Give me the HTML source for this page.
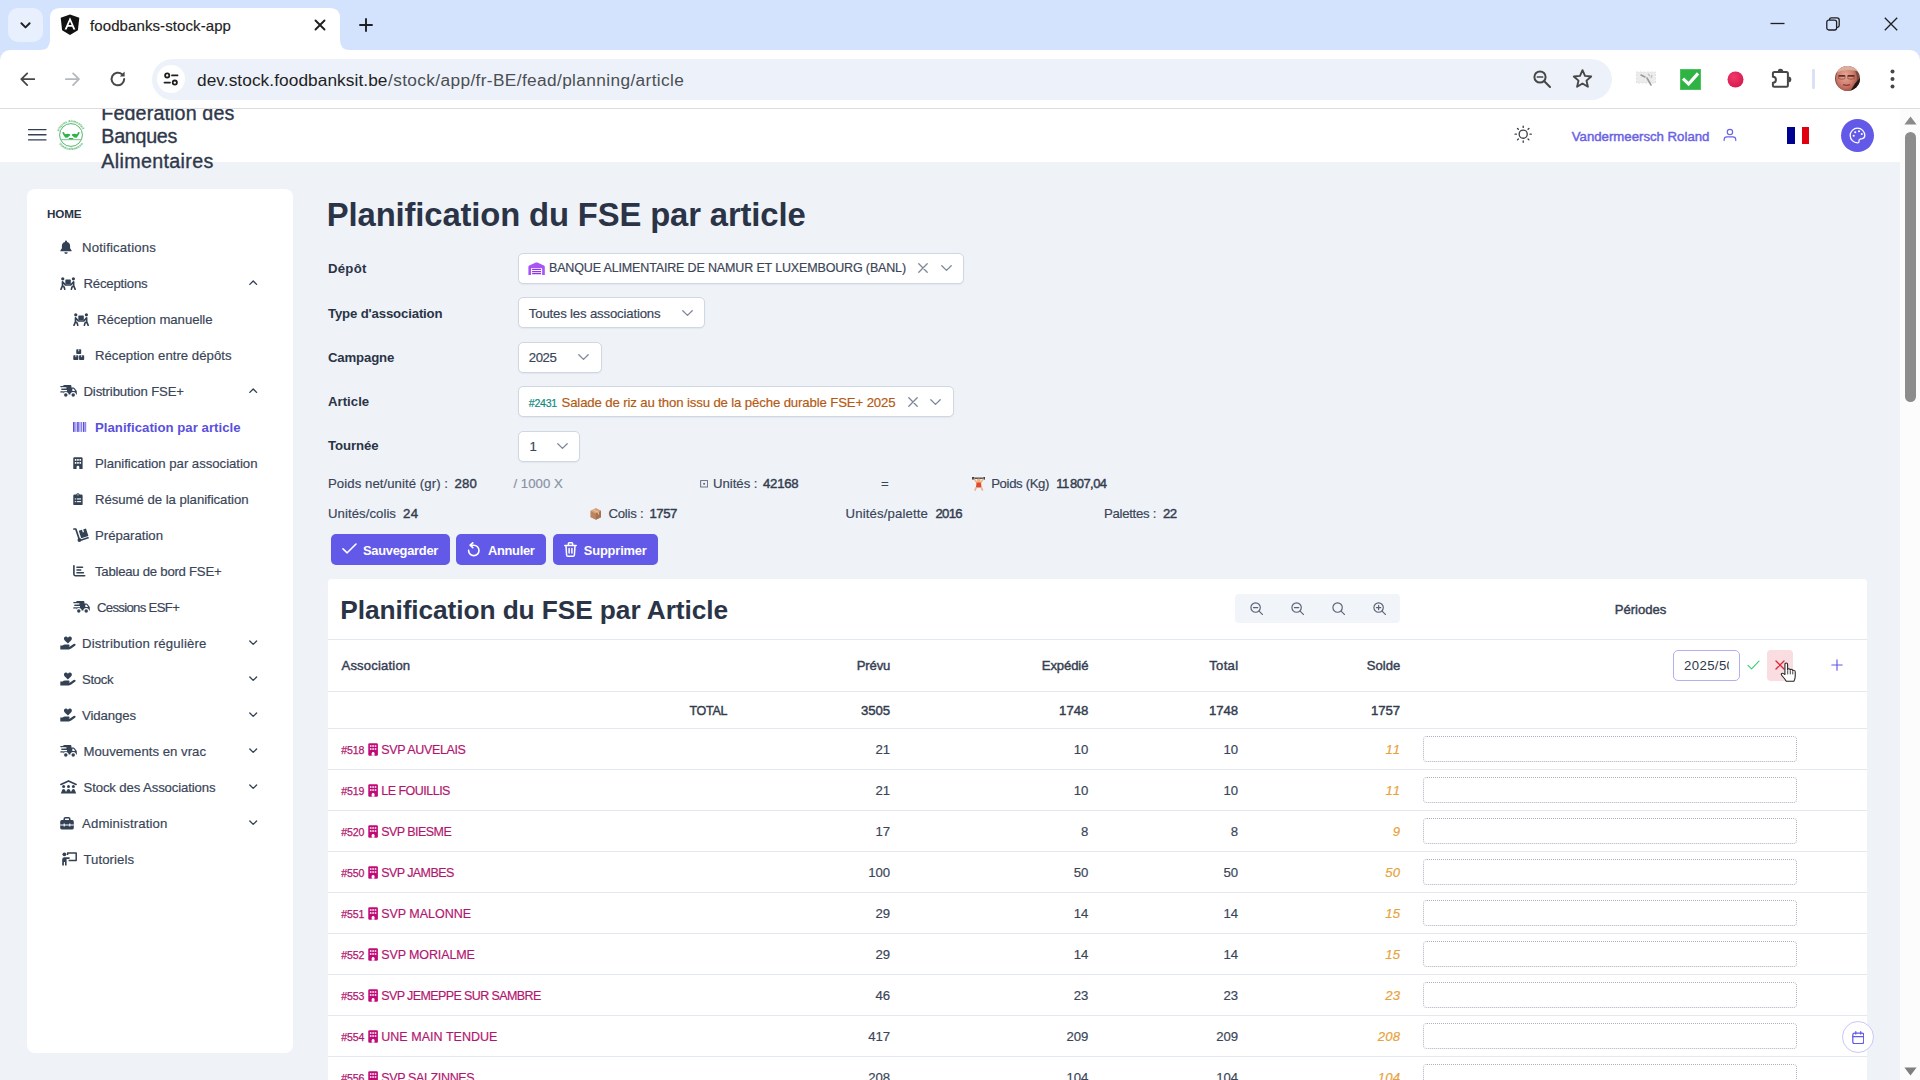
<!DOCTYPE html>
<html lang="fr"><head><meta charset="utf-8"><title>foodbanks-stock-app</title>
<style>
html,body{margin:0;padding:0}
body{width:1920px;height:1080px;overflow:hidden;position:relative;background:#eff3f8;font-family:'Liberation Sans', sans-serif;color:#334155}
div,svg{box-sizing:border-box}
</style></head><body>
<div  style="position:absolute;left:0px;top:109px;width:1900px;height:53px;background:#fff;"></div>
<div  style="position:absolute;left:1900px;top:109px;width:20px;height:971px;background:#fcfcfc;"></div>
<svg style="position:absolute;left:1903.5px;top:116px;" width="13" height="9" viewBox="0 0 13 9" preserveAspectRatio="none"><path d="M6.5 0.6 L12.6 8.4 H0.4 Z" fill="#8a8a8a"/></svg>
<div  style="position:absolute;left:1905px;top:132px;width:11px;height:270px;background:#8c8c8c;border-radius:6px;"></div>
<svg style="position:absolute;left:1903.5px;top:1066.5px;" width="13" height="9" viewBox="0 0 13 9" preserveAspectRatio="none"><path d="M6.5 8.4 L12.6 0.6 H0.4 Z" fill="#7f7f7f"/></svg>
<svg style="position:absolute;left:28px;top:127px;" width="19" height="16" viewBox="0 0 19 16" preserveAspectRatio="none"><path d="M0.5 2.6 H18 M0.5 7.7 H18 M0.5 12.8 H18" stroke="#334155" stroke-width="1.35" stroke-linecap="round"/></svg>
<svg style="position:absolute;left:55.6px;top:120.3px;overflow:visible;" width="30" height="30" viewBox="0 0 30 30" preserveAspectRatio="none"><defs><path id="lgt" d="M3.07 10.66 A12.7 12.7 0 0 1 26.93 10.66"/><path id="lgb" d="M0.73 19.64 A15.0 15.0 0 0 0 29.27 19.64"/></defs>
<circle cx="15" cy="15" r="11.4" fill="none" stroke="#3aa857" stroke-width="0.85"/>
<text font-family="Liberation Sans, sans-serif" font-size="3.4" font-weight="700" fill="#36b058" letter-spacing="0.1"><textPath href="#lgt" startOffset="50%" text-anchor="middle">Banques Alimentaires</textPath></text>
<text font-family="Liberation Sans, sans-serif" font-size="3.4" font-weight="700" fill="#36b058" letter-spacing="0.3"><textPath href="#lgb" startOffset="50%" text-anchor="middle">Voedselbanken</textPath></text>
<path d="M6.2 12.4 Q7.4 11.4 8.2 12.6 L8.9 14.2 Q11.2 13.6 13.4 14 Q14.6 14.4 14 15.6 Q12.6 16.4 11.8 17.6 L9.4 17.8 Q7.4 15.4 6.2 12.4 Z" fill="#2eb24c"/>
<path d="M23.8 12.4 Q22.6 11.4 21.8 12.6 L21.1 14.2 Q18.8 13.6 16.6 14 Q15.4 14.4 16 15.6 Q17.4 16.4 18.2 17.6 L20.6 17.8 Q22.6 15.4 23.8 12.4 Z" fill="#2eb24c"/>
<path d="M12.4 17.9 H17.6 Q17.2 19.5 15 19.5 Q12.8 19.5 12.4 17.9 Z" fill="#2eb24c"/>
<path d="M5 19.7 H25" stroke="#5fbf78" stroke-width="0.9"/></svg>
<div style="position:absolute;top:97.97px;line-height:30px;height:30px;white-space:pre;font-size:19.7px;font-weight:400;color:#2f384a;font-style:normal;letter-spacing:0.130px;-webkit-text-stroke:0.35px #2f384a;left:101.30px;">Federation des</div>
<div style="position:absolute;top:121.37px;line-height:30px;height:30px;white-space:pre;font-size:19.7px;font-weight:400;color:#2f384a;font-style:normal;letter-spacing:-0.282px;-webkit-text-stroke:0.35px #2f384a;left:101.30px;">Banques</div>
<div style="position:absolute;top:146.07px;line-height:30px;height:30px;white-space:pre;font-size:19.7px;font-weight:400;color:#2f384a;font-style:normal;letter-spacing:0.337px;-webkit-text-stroke:0.35px #2f384a;left:101.30px;">Alimentaires</div>
<svg style="position:absolute;left:1514.3px;top:125.2px;" width="18.4" height="18.4" viewBox="0 0 20 20" preserveAspectRatio="none"><g fill="none" stroke="#3a3f47" stroke-width="1.45" stroke-linecap="round"><circle cx="10" cy="10" r="4.4"/><path d="M10 1.2 V2.6 M10 17.4 V18.8 M1.2 10 H2.6 M17.4 10 H18.8 M3.8 3.8 L4.7 4.7 M15.3 15.3 L16.2 16.2 M3.8 16.2 L4.7 15.3 M15.3 4.7 L16.2 3.8"/></g></svg>
<div style="position:absolute;top:126.85px;line-height:20px;height:20px;white-space:pre;font-size:13.2px;font-weight:400;color:#6a62e4;font-style:normal;letter-spacing:0.001px;-webkit-text-stroke:0.45px #6a62e4;left:1571.80px;">Vandermeersch Roland</div>
<svg style="position:absolute;left:1722.8px;top:127.9px;" width="13.9" height="13.9" viewBox="0 0 15 15" preserveAspectRatio="none"><g fill="none" stroke="#6a62e4" stroke-width="1.25" stroke-linecap="round"><circle cx="7.5" cy="4.4" r="2.9"/><path d="M1.2 13.6 V12.6 Q1.2 9.6 4.4 9.6 H10.6 Q13.8 9.6 13.8 12.6 V13.6"/></g></svg>
<div  style="position:absolute;left:1787px;top:127px;width:7.5px;height:16.7px;background:#000091;"></div>
<div  style="position:absolute;left:1794.5px;top:127px;width:7.2px;height:16.7px;background:#ffffff;"></div>
<div  style="position:absolute;left:1801.7px;top:127px;width:7.5px;height:16.7px;background:#e1000f;"></div>
<div  style="position:absolute;left:1841px;top:118.8px;width:33px;height:33px;background:#6259e8;border-radius:50%;"></div>
<svg style="position:absolute;left:1849px;top:126.5px;" width="17" height="17" viewBox="0 0 17 17" preserveAspectRatio="none"><g fill="none" stroke="#fff" stroke-width="1.3" stroke-linecap="round" stroke-linejoin="round"><path d="M8.5 1.2 A7.3 7.3 0 1 0 8.5 15.8 Q10.2 15.8 10 14.2 Q9.6 12.6 11.2 12 L13.4 11.6 Q15.8 11 15.8 8.5 A7.3 7.3 0 0 0 8.5 1.2 Z"/></g><g fill="#fff"><circle cx="4.7" cy="8.8" r="1.05"/><circle cx="6.2" cy="5.3" r="1.05"/><circle cx="10" cy="4.3" r="1.05"/><circle cx="12.8" cy="7" r="1.05"/></g></svg>
<div  style="position:absolute;left:27px;top:189px;width:266px;height:864px;background:#fff;border-radius:8px;"></div>
<div style="position:absolute;top:204.87px;line-height:18px;height:18px;white-space:pre;font-size:11.7px;font-weight:700;color:#2b3445;font-style:normal;letter-spacing:-0.161px;left:47.00px;">HOME</div>
<svg style="position:absolute;left:60px;top:240.2px;" width="12.0" height="14.0" viewBox="0 0 12 14" preserveAspectRatio="none"><path d="M6 0.4 a1 1 0 0 1 1 1 v0.5 a4.1 4.1 0 0 1 3.1 4 v2.4 l1.5 2.1 v0.9 h-11.2 v-0.9 l1.5 -2.1 v-2.4 a4.1 4.1 0 0 1 3.1 -4 v-0.5 a1 1 0 0 1 1 -1 z M4.3 12.2 a1.7 1.7 0 0 0 3.4 0 z" fill="#334155"/></svg>
<div style="position:absolute;top:238.15px;line-height:20px;height:20px;white-space:pre;font-size:13.2px;font-weight:400;color:#3a4558;font-style:normal;letter-spacing:0.172px;-webkit-text-stroke:0.18px #3a4558;left:82.00px;">Notifications</div>
<svg style="position:absolute;left:60px;top:276.55px;" width="16.15" height="13.3" viewBox="0 0 17 14" preserveAspectRatio="none"><g fill="#334155"><circle cx="2.9" cy="1.9" r="1.7"/><circle cx="14.1" cy="1.9" r="1.7"/><rect x="5.6" y="2.6" width="5.8" height="5" rx="0.5"/></g><g fill="none" stroke="#334155" stroke-width="1.7" stroke-linecap="round" stroke-linejoin="round"><path d="M2.6 5 V9.2 L4.4 10.6 L5 13 M2.4 9.6 L1 13 M3 5.4 L5.6 8.4 H11.4 L14 5.4 M14.4 5 V9.2 L12.6 10.6 L12 13 M14.6 9.6 L16 13"/></g></svg>
<div style="position:absolute;top:274.15px;line-height:20px;height:20px;white-space:pre;font-size:13.2px;font-weight:400;color:#3a4558;font-style:normal;letter-spacing:-0.209px;-webkit-text-stroke:0.18px #3a4558;left:83.50px;">Réceptions</div>
<svg style="position:absolute;left:249.3px;top:280.3px;" width="8.4" height="5.4" viewBox="0 0 8.4 5.4" preserveAspectRatio="none"><path d="M0.8 4.4 L4.2 1 L7.6 4.4" fill="none" stroke="#334155" stroke-width="1.35" stroke-linecap="round" stroke-linejoin="round"/></svg>
<svg style="position:absolute;left:73px;top:312.55px;" width="16.15" height="13.3" viewBox="0 0 17 14" preserveAspectRatio="none"><g fill="#334155"><circle cx="2.9" cy="1.9" r="1.7"/><circle cx="14.1" cy="1.9" r="1.7"/><rect x="5.6" y="2.6" width="5.8" height="5" rx="0.5"/></g><g fill="none" stroke="#334155" stroke-width="1.7" stroke-linecap="round" stroke-linejoin="round"><path d="M2.6 5 V9.2 L4.4 10.6 L5 13 M2.4 9.6 L1 13 M3 5.4 L5.6 8.4 H11.4 L14 5.4 M14.4 5 V9.2 L12.6 10.6 L12 13 M14.6 9.6 L16 13"/></g></svg>
<div style="position:absolute;top:310.15px;line-height:20px;height:20px;white-space:pre;font-size:13.2px;font-weight:400;color:#3a4558;font-style:normal;letter-spacing:-0.062px;-webkit-text-stroke:0.18px #3a4558;left:97.00px;">Réception manuelle</div>
<svg style="position:absolute;left:73.3px;top:349.47999999999996px;" width="11.44" height="11.44" viewBox="0 0 13 13" preserveAspectRatio="none"><g fill="#334155"><rect x="3.7" y="0.3" width="5.6" height="5.4" rx="0.9"/><rect x="0.3" y="7" width="5.8" height="5.6" rx="0.9"/><rect x="6.9" y="7" width="5.8" height="5.6" rx="0.9"/></g><g stroke="#fff" stroke-width="0.9"><path d="M6.5 0.3 V2.6 M3.2 7 V9.2 M9.8 7 V9.2"/></g></svg>
<div style="position:absolute;top:346.15px;line-height:20px;height:20px;white-space:pre;font-size:13.2px;font-weight:400;color:#3a4558;font-style:normal;letter-spacing:0.006px;-webkit-text-stroke:0.18px #3a4558;left:95.00px;">Réception entre dépôts</div>
<svg style="position:absolute;left:60px;top:384.2px;" width="17.0" height="14.0" viewBox="0 0 17 14" preserveAspectRatio="none"><g fill="#334155"><path d="M3.4 1 H10.4 Q11.4 1 11.4 2 V3.4 H13.4 Q14 3.4 14.4 3.9 L16.4 6.4 Q16.8 6.9 16.8 7.5 V10.6 H3.4 Z"/><rect x="0.2" y="1.9" width="5.4" height="1.3" rx="0.6"/><rect x="1.2" y="4.6" width="5" height="1.3" rx="0.6"/><rect x="0.2" y="7.3" width="4.6" height="1.3" rx="0.6"/></g><g fill="#334155" stroke="#fff" stroke-width="1.1"><circle cx="5.8" cy="10.9" r="2.3"/><circle cx="13.2" cy="10.9" r="2.3"/></g><path d="M12.3 4.8 H13.6 L15.2 6.9 H12.3 Z" fill="#fff"/><g stroke="#fff" stroke-width="1.1"><path d="M2.6 3.9 H6.4 M2.6 6.6 H7 "/></g></svg>
<div style="position:absolute;top:382.15px;line-height:20px;height:20px;white-space:pre;font-size:13.2px;font-weight:400;color:#3a4558;font-style:normal;letter-spacing:-0.151px;-webkit-text-stroke:0.18px #3a4558;left:83.50px;">Distribution FSE+</div>
<svg style="position:absolute;left:249.3px;top:388.3px;" width="8.4" height="5.4" viewBox="0 0 8.4 5.4" preserveAspectRatio="none"><path d="M0.8 4.4 L4.2 1 L7.6 4.4" fill="none" stroke="#334155" stroke-width="1.35" stroke-linecap="round" stroke-linejoin="round"/></svg>
<svg style="position:absolute;left:73px;top:422.25px;" width="13.5" height="9.9" viewBox="0 0 15 11" preserveAspectRatio="none"><g fill="#5a50dc"><rect x="0" y="0" width="1.8" height="11"/><rect x="2.8" y="0" width="0.9" height="11"/><rect x="4.6" y="0" width="1.8" height="11"/><rect x="7.3" y="0" width="0.9" height="11"/><rect x="9.2" y="0" width="0.9" height="11"/><rect x="11" y="0" width="1.8" height="11"/><rect x="13.7" y="0" width="0.9" height="11"/></g></svg>
<div style="position:absolute;top:418.15px;line-height:20px;height:20px;white-space:pre;font-size:13.2px;font-weight:700;color:#5a50dc;font-style:normal;letter-spacing:0.016px;left:95.00px;">Planification par article</div>
<svg style="position:absolute;left:73px;top:456.9px;" width="9.9" height="12.6" viewBox="0 0 11 14" preserveAspectRatio="none"><rect x="0.3" y="0.3" width="10.4" height="13.4" rx="1.3" fill="#334155"/><g fill="#fff"><rect x="2" y="2.3" width="1.8" height="1.8" rx="0.3"/><rect x="4.6" y="2.3" width="1.8" height="1.8" rx="0.3"/><rect x="7.2" y="2.3" width="1.8" height="1.8" rx="0.3"/><rect x="2" y="5.6" width="1.8" height="1.8" rx="0.3"/><rect x="4.6" y="5.6" width="1.8" height="1.8" rx="0.3"/><rect x="7.2" y="5.6" width="1.8" height="1.8" rx="0.3"/><path d="M4 13.7 V11 Q4 9.6 5.5 9.6 Q7 9.6 7 11 V13.7 Z"/></g></svg>
<div style="position:absolute;top:454.15px;line-height:20px;height:20px;white-space:pre;font-size:13.2px;font-weight:400;color:#3a4558;font-style:normal;letter-spacing:-0.035px;-webkit-text-stroke:0.18px #3a4558;left:95.00px;">Planification par association</div>
<svg style="position:absolute;left:73px;top:492.9px;" width="9.9" height="12.6" viewBox="0 0 11 14" preserveAspectRatio="none"><path d="M1.8 1.6 H3.6 A2 2 0 0 1 7.4 1.6 H9.2 Q10.7 1.6 10.7 3.1 V12.2 Q10.7 13.7 9.2 13.7 H1.8 Q0.3 13.7 0.3 12.2 V3.1 Q0.3 1.6 1.8 1.6 Z" fill="#334155"/><g fill="#fff"><circle cx="5.5" cy="2" r="0.7"/><rect x="2" y="6" width="1.2" height="1.2"/><rect x="4.2" y="6" width="4.8" height="1.2"/><rect x="2" y="9" width="1.2" height="1.2"/><rect x="4.2" y="9" width="4.8" height="1.2"/></g></svg>
<div style="position:absolute;top:490.15px;line-height:20px;height:20px;white-space:pre;font-size:13.2px;font-weight:400;color:#3a4558;font-style:normal;letter-spacing:-0.047px;-webkit-text-stroke:0.18px #3a4558;left:95.00px;">Résumé de la planification</div>
<svg style="position:absolute;left:73px;top:528.2px;" width="16.0" height="14.0" viewBox="0 0 16 14" preserveAspectRatio="none"><g fill="none" stroke="#334155" stroke-width="1.7" stroke-linecap="round" stroke-linejoin="round"><path d="M0.9 1 H2.8 L6 10.4"/><path d="M8.4 12 L15 9.8"/></g><circle cx="6.4" cy="12" r="1.9" fill="#334155"/><path d="M5.8 2.8 L9 1.8 L9.8 4.4 L11 4 L10.2 1.4 L13 0.5 L15.4 8 L8.2 10.3 Z" fill="#334155"/></svg>
<div style="position:absolute;top:526.15px;line-height:20px;height:20px;white-space:pre;font-size:13.2px;font-weight:400;color:#3a4558;font-style:normal;letter-spacing:-0.018px;-webkit-text-stroke:0.18px #3a4558;left:95.00px;">Préparation</div>
<svg style="position:absolute;left:73px;top:565.35px;" width="12.6" height="11.7" viewBox="0 0 14 13" preserveAspectRatio="none"><g fill="none" stroke="#334155" stroke-linecap="round" stroke-linejoin="round"><path d="M1 0.9 V10.4 Q1 11.9 2.5 11.9 H13" stroke-width="1.8"/><path d="M4.4 2.4 H10.6 M4.4 5.5 H8.6 M4.4 8.6 H11.6" stroke-width="1.7"/></g></svg>
<div style="position:absolute;top:562.15px;line-height:20px;height:20px;white-space:pre;font-size:13.2px;font-weight:400;color:#3a4558;font-style:normal;letter-spacing:-0.262px;-webkit-text-stroke:0.18px #3a4558;left:95.00px;">Tableau de bord FSE+</div>
<svg style="position:absolute;left:73px;top:600.2px;" width="17.0" height="14.0" viewBox="0 0 17 14" preserveAspectRatio="none"><g fill="#334155"><path d="M3.4 1 H10.4 Q11.4 1 11.4 2 V3.4 H13.4 Q14 3.4 14.4 3.9 L16.4 6.4 Q16.8 6.9 16.8 7.5 V10.6 H3.4 Z"/><rect x="0.2" y="1.9" width="5.4" height="1.3" rx="0.6"/><rect x="1.2" y="4.6" width="5" height="1.3" rx="0.6"/><rect x="0.2" y="7.3" width="4.6" height="1.3" rx="0.6"/></g><g fill="#334155" stroke="#fff" stroke-width="1.1"><circle cx="5.8" cy="10.9" r="2.3"/><circle cx="13.2" cy="10.9" r="2.3"/></g><path d="M12.3 4.8 H13.6 L15.2 6.9 H12.3 Z" fill="#fff"/><g stroke="#fff" stroke-width="1.1"><path d="M2.6 3.9 H6.4 M2.6 6.6 H7 "/></g></svg>
<div style="position:absolute;top:598.15px;line-height:20px;height:20px;white-space:pre;font-size:13.2px;font-weight:400;color:#3a4558;font-style:normal;letter-spacing:-0.701px;-webkit-text-stroke:0.18px #3a4558;left:97.00px;">Cessions ESF+</div>
<svg style="position:absolute;left:60px;top:636.2px;" width="16.0" height="14.0" viewBox="0 0 16 14" preserveAspectRatio="none"><path d="M7.9 1.7 Q6.9 0.2 5.5 0.5 Q3.9 0.9 3.9 2.6 Q3.9 3.7 4.8 4.6 L7.9 7.5 L11 4.6 Q11.9 3.7 11.9 2.6 Q11.9 0.9 10.3 0.5 Q8.9 0.2 7.9 1.7 Z" fill="#334155"/><path d="M0.3 9.6 H2.6 Q3.6 8.6 5 8.6 H8.6 Q9.6 8.6 9.6 9.5 Q9.6 10.3 8.6 10.4 H10 L13.6 8 Q14.8 7.3 15.5 8.2 Q16 9.1 15 9.8 L11.2 12.6 Q10.2 13.4 8.8 13.4 H0.3 Z" fill="#334155"/></svg>
<div style="position:absolute;top:634.15px;line-height:20px;height:20px;white-space:pre;font-size:13.2px;font-weight:400;color:#3a4558;font-style:normal;letter-spacing:0.165px;-webkit-text-stroke:0.18px #3a4558;left:82.00px;">Distribution régulière</div>
<svg style="position:absolute;left:249.3px;top:640.3px;" width="8.4" height="5.4" viewBox="0 0 8.4 5.4" preserveAspectRatio="none"><path d="M0.8 1 L4.2 4.4 L7.6 1" fill="none" stroke="#334155" stroke-width="1.35" stroke-linecap="round" stroke-linejoin="round"/></svg>
<svg style="position:absolute;left:60px;top:672.2px;" width="16.0" height="14.0" viewBox="0 0 16 14" preserveAspectRatio="none"><path d="M7.9 1.7 Q6.9 0.2 5.5 0.5 Q3.9 0.9 3.9 2.6 Q3.9 3.7 4.8 4.6 L7.9 7.5 L11 4.6 Q11.9 3.7 11.9 2.6 Q11.9 0.9 10.3 0.5 Q8.9 0.2 7.9 1.7 Z" fill="#334155"/><path d="M0.3 9.6 H2.6 Q3.6 8.6 5 8.6 H8.6 Q9.6 8.6 9.6 9.5 Q9.6 10.3 8.6 10.4 H10 L13.6 8 Q14.8 7.3 15.5 8.2 Q16 9.1 15 9.8 L11.2 12.6 Q10.2 13.4 8.8 13.4 H0.3 Z" fill="#334155"/></svg>
<div style="position:absolute;top:670.15px;line-height:20px;height:20px;white-space:pre;font-size:13.2px;font-weight:400;color:#3a4558;font-style:normal;letter-spacing:-0.330px;-webkit-text-stroke:0.18px #3a4558;left:82.00px;">Stock</div>
<svg style="position:absolute;left:249.3px;top:676.3px;" width="8.4" height="5.4" viewBox="0 0 8.4 5.4" preserveAspectRatio="none"><path d="M0.8 1 L4.2 4.4 L7.6 1" fill="none" stroke="#334155" stroke-width="1.35" stroke-linecap="round" stroke-linejoin="round"/></svg>
<svg style="position:absolute;left:60px;top:708.2px;" width="16.0" height="14.0" viewBox="0 0 16 14" preserveAspectRatio="none"><path d="M7.9 1.7 Q6.9 0.2 5.5 0.5 Q3.9 0.9 3.9 2.6 Q3.9 3.7 4.8 4.6 L7.9 7.5 L11 4.6 Q11.9 3.7 11.9 2.6 Q11.9 0.9 10.3 0.5 Q8.9 0.2 7.9 1.7 Z" fill="#334155"/><path d="M0.3 9.6 H2.6 Q3.6 8.6 5 8.6 H8.6 Q9.6 8.6 9.6 9.5 Q9.6 10.3 8.6 10.4 H10 L13.6 8 Q14.8 7.3 15.5 8.2 Q16 9.1 15 9.8 L11.2 12.6 Q10.2 13.4 8.8 13.4 H0.3 Z" fill="#334155"/></svg>
<div style="position:absolute;top:706.15px;line-height:20px;height:20px;white-space:pre;font-size:13.2px;font-weight:400;color:#3a4558;font-style:normal;letter-spacing:-0.102px;-webkit-text-stroke:0.18px #3a4558;left:82.00px;">Vidanges</div>
<svg style="position:absolute;left:249.3px;top:712.3px;" width="8.4" height="5.4" viewBox="0 0 8.4 5.4" preserveAspectRatio="none"><path d="M0.8 1 L4.2 4.4 L7.6 1" fill="none" stroke="#334155" stroke-width="1.35" stroke-linecap="round" stroke-linejoin="round"/></svg>
<svg style="position:absolute;left:60px;top:744.2px;" width="17.0" height="14.0" viewBox="0 0 17 14" preserveAspectRatio="none"><g fill="#334155"><path d="M3.4 1 H10.4 Q11.4 1 11.4 2 V3.4 H13.4 Q14 3.4 14.4 3.9 L16.4 6.4 Q16.8 6.9 16.8 7.5 V10.6 H3.4 Z"/><rect x="0.2" y="1.9" width="5.4" height="1.3" rx="0.6"/><rect x="1.2" y="4.6" width="5" height="1.3" rx="0.6"/><rect x="0.2" y="7.3" width="4.6" height="1.3" rx="0.6"/></g><g fill="#334155" stroke="#fff" stroke-width="1.1"><circle cx="5.8" cy="10.9" r="2.3"/><circle cx="13.2" cy="10.9" r="2.3"/></g><path d="M12.3 4.8 H13.6 L15.2 6.9 H12.3 Z" fill="#fff"/><g stroke="#fff" stroke-width="1.1"><path d="M2.6 3.9 H6.4 M2.6 6.6 H7 "/></g></svg>
<div style="position:absolute;top:742.15px;line-height:20px;height:20px;white-space:pre;font-size:13.2px;font-weight:400;color:#3a4558;font-style:normal;letter-spacing:0.005px;-webkit-text-stroke:0.18px #3a4558;left:83.50px;">Mouvements en vrac</div>
<svg style="position:absolute;left:249.3px;top:748.3px;" width="8.4" height="5.4" viewBox="0 0 8.4 5.4" preserveAspectRatio="none"><path d="M0.8 1 L4.2 4.4 L7.6 1" fill="none" stroke="#334155" stroke-width="1.35" stroke-linecap="round" stroke-linejoin="round"/></svg>
<svg style="position:absolute;left:60px;top:780.2px;" width="17.0" height="14.0" viewBox="0 0 17 14" preserveAspectRatio="none"><path d="M0.9 4.4 L8.5 0.9 L16.1 4.4" fill="none" stroke="#334155" stroke-width="1.6" stroke-linecap="round" stroke-linejoin="round"/><g fill="#334155"><circle cx="3.6" cy="6.6" r="1.5"/><circle cx="8.5" cy="6.6" r="1.5"/><circle cx="13.4" cy="6.6" r="1.5"/><path d="M0.8 13.6 L2.4 9.4 Q3.6 8.6 4.8 9.4 L6 12 L7.3 9.4 Q8.5 8.6 9.7 9.4 L11 12 L12.2 9.4 Q13.4 8.6 14.6 9.4 L16.2 13.6 Z"/></g></svg>
<div style="position:absolute;top:778.15px;line-height:20px;height:20px;white-space:pre;font-size:13.2px;font-weight:400;color:#3a4558;font-style:normal;letter-spacing:-0.134px;-webkit-text-stroke:0.18px #3a4558;left:83.50px;">Stock des Associations</div>
<svg style="position:absolute;left:249.3px;top:784.3px;" width="8.4" height="5.4" viewBox="0 0 8.4 5.4" preserveAspectRatio="none"><path d="M0.8 1 L4.2 4.4 L7.6 1" fill="none" stroke="#334155" stroke-width="1.35" stroke-linecap="round" stroke-linejoin="round"/></svg>
<svg style="position:absolute;left:60px;top:816.7px;" width="14.0" height="13.0" viewBox="0 0 14 13" preserveAspectRatio="none"><path d="M4.2 3.2 V2.2 Q4.2 0.8 5.6 0.8 H8.4 Q9.8 0.8 9.8 2.2 V3.2" fill="none" stroke="#334155" stroke-width="1.6"/><path d="M1.8 3 H12.2 Q13.1 3 13.5 3.8 L13.8 5 V11 Q13.8 12.4 12.4 12.4 H1.6 Q0.2 12.4 0.2 11 V5 L0.5 3.8 Q0.9 3 1.8 3 Z" fill="#334155"/><path d="M0.2 8 H13.8 M4.2 6.6 V9.4 M9.8 6.6 V9.4" stroke="#fff" stroke-width="1.1"/></svg>
<div style="position:absolute;top:814.15px;line-height:20px;height:20px;white-space:pre;font-size:13.2px;font-weight:400;color:#3a4558;font-style:normal;letter-spacing:0.144px;-webkit-text-stroke:0.18px #3a4558;left:82.00px;">Administration</div>
<svg style="position:absolute;left:249.3px;top:820.3px;" width="8.4" height="5.4" viewBox="0 0 8.4 5.4" preserveAspectRatio="none"><path d="M0.8 1 L4.2 4.4 L7.6 1" fill="none" stroke="#334155" stroke-width="1.35" stroke-linecap="round" stroke-linejoin="round"/></svg>
<svg style="position:absolute;left:60.5px;top:852.2px;" width="16.0" height="14.0" viewBox="0 0 16 14" preserveAspectRatio="none"><circle cx="3.4" cy="2.3" r="1.9" fill="#334155"/><path d="M1.2 13.6 V7.6 Q1.2 5.2 3.4 5.2 H8.6 V6.9 H5.6 V13.6 H4 V10 H2.9 V13.6 Z" fill="#334155"/><path d="M6.6 3 V1 H15.2 V8.6 H7.6" fill="none" stroke="#334155" stroke-width="1.5" stroke-linejoin="round"/></svg>
<div style="position:absolute;top:850.15px;line-height:20px;height:20px;white-space:pre;font-size:13.2px;font-weight:400;color:#3a4558;font-style:normal;letter-spacing:0.050px;-webkit-text-stroke:0.18px #3a4558;left:83.50px;">Tutoriels</div>
<div style="position:absolute;top:189.72px;line-height:49px;height:49px;white-space:pre;font-size:32.8px;font-weight:700;color:#2b3447;font-style:normal;letter-spacing:-0.132px;left:326.80px;">Planification du FSE par article</div>
<div style="position:absolute;top:258.75px;line-height:20px;height:20px;white-space:pre;font-size:13.2px;font-weight:700;color:#2b3447;font-style:normal;letter-spacing:0.250px;left:328.00px;">Dépôt</div>
<div style="position:absolute;top:303.75px;line-height:20px;height:20px;white-space:pre;font-size:13.2px;font-weight:700;color:#2b3447;font-style:normal;letter-spacing:-0.155px;left:328.00px;">Type d&#x27;association</div>
<div style="position:absolute;top:347.65px;line-height:20px;height:20px;white-space:pre;font-size:13.2px;font-weight:700;color:#2b3447;font-style:normal;letter-spacing:-0.163px;left:328.00px;">Campagne</div>
<div style="position:absolute;top:392.05px;line-height:20px;height:20px;white-space:pre;font-size:13.2px;font-weight:700;color:#2b3447;font-style:normal;letter-spacing:0.024px;left:328.00px;">Article</div>
<div style="position:absolute;top:436.45px;line-height:20px;height:20px;white-space:pre;font-size:13.2px;font-weight:700;color:#2b3447;font-style:normal;letter-spacing:-0.084px;left:328.00px;">Tournée</div>
<div  style="position:absolute;left:518px;top:252.5px;width:446px;height:31px;background:#fff;border:1px solid #cfd7e3;border-radius:5px;box-shadow:0 1px 1.5px rgba(18,24,40,.05);"></div>
<div  style="position:absolute;left:518px;top:297px;width:186.5px;height:31px;background:#fff;border:1px solid #cfd7e3;border-radius:5px;box-shadow:0 1px 1.5px rgba(18,24,40,.05);"></div>
<div  style="position:absolute;left:518px;top:341.8px;width:83.5px;height:31px;background:#fff;border:1px solid #cfd7e3;border-radius:5px;box-shadow:0 1px 1.5px rgba(18,24,40,.05);"></div>
<div  style="position:absolute;left:518px;top:386.2px;width:435.5px;height:31px;background:#fff;border:1px solid #cfd7e3;border-radius:5px;box-shadow:0 1px 1.5px rgba(18,24,40,.05);"></div>
<div  style="position:absolute;left:518px;top:430.8px;width:61.5px;height:31px;background:#fff;border:1px solid #cfd7e3;border-radius:5px;box-shadow:0 1px 1.5px rgba(18,24,40,.05);"></div>
<svg style="position:absolute;left:528px;top:261.7px;" width="17.2" height="13.4" viewBox="0 0 17.5 15" preserveAspectRatio="none"><path d="M0.4 14.6 V5.2 Q0.4 4.2 1.3 3.8 L8 0.7 Q8.75 0.4 9.5 0.7 L16.2 3.8 Q17.1 4.2 17.1 5.2 V14.6 H14.4 V7.6 Q14.4 6.6 13.4 6.6 H4.1 Q3.1 6.6 3.1 7.6 V14.6 Z" fill="#a855f7"/><path d="M4.2 8.3 H13.3 M4.2 10.7 H13.3 M4.2 13.1 H13.3" stroke="#9333ea" stroke-width="1.5"/></svg>
<div style="position:absolute;top:259.46px;line-height:19px;height:19px;white-space:pre;font-size:12.5px;font-weight:400;color:#3a4558;font-style:normal;letter-spacing:-0.151px;-webkit-text-stroke:0.18px #3a4558;left:549.00px;">BANQUE ALIMENTAIRE DE NAMUR ET LUXEMBOURG (BANL)</div>
<svg style="position:absolute;left:917.5px;top:263px;" width="10" height="10" viewBox="0 0 10 10" preserveAspectRatio="none"><path d="M0.8 0.8 L9.2 9.2 M9.2 0.8 L0.8 9.2" fill="none" stroke="#7d8798" stroke-width="1.3" stroke-linecap="round"/></svg>
<svg style="position:absolute;left:940.5px;top:265.1px;" width="11" height="6.4" viewBox="0 0 11 6.4" preserveAspectRatio="none"><path d="M0.8 0.8 L5.5 5.4 L10.2 0.8" fill="none" stroke="#7d8798" stroke-width="1.3" stroke-linecap="round" stroke-linejoin="round"/></svg>
<div style="position:absolute;top:303.65px;line-height:20px;height:20px;white-space:pre;font-size:13.2px;font-weight:400;color:#3a4558;font-style:normal;letter-spacing:-0.174px;-webkit-text-stroke:0.18px #3a4558;left:528.80px;">Toutes les associations</div>
<svg style="position:absolute;left:682.0px;top:309.6px;" width="11" height="6.4" viewBox="0 0 11 6.4" preserveAspectRatio="none"><path d="M0.8 0.8 L5.5 5.4 L10.2 0.8" fill="none" stroke="#7d8798" stroke-width="1.3" stroke-linecap="round" stroke-linejoin="round"/></svg>
<div style="position:absolute;top:348.15px;line-height:20px;height:20px;white-space:pre;font-size:13.2px;font-weight:400;color:#3a4558;font-style:normal;letter-spacing:-0.470px;-webkit-text-stroke:0.18px #3a4558;left:528.80px;">2025</div>
<svg style="position:absolute;left:577.8px;top:354.3px;" width="11" height="6.4" viewBox="0 0 11 6.4" preserveAspectRatio="none"><path d="M0.8 0.8 L5.5 5.4 L10.2 0.8" fill="none" stroke="#7d8798" stroke-width="1.3" stroke-linecap="round" stroke-linejoin="round"/></svg>
<div style="position:absolute;top:395.28px;line-height:16px;height:16px;white-space:pre;font-size:10.6px;font-weight:400;color:#0f8a7e;font-style:normal;letter-spacing:-0.282px;-webkit-text-stroke:0.18px #0f8a7e;left:528.80px;">#2431</div>
<div style="position:absolute;top:392.65px;line-height:20px;height:20px;white-space:pre;font-size:13.2px;font-weight:400;color:#b45a12;font-style:normal;letter-spacing:-0.131px;-webkit-text-stroke:0.18px #b45a12;left:561.50px;">Salade de riz au thon issu de la pêche durable FSE+ 2025</div>
<svg style="position:absolute;left:907.5px;top:396.8px;" width="10" height="10" viewBox="0 0 10 10" preserveAspectRatio="none"><path d="M0.8 0.8 L9.2 9.2 M9.2 0.8 L0.8 9.2" fill="none" stroke="#7d8798" stroke-width="1.3" stroke-linecap="round"/></svg>
<svg style="position:absolute;left:930.0px;top:398.8px;" width="11" height="6.4" viewBox="0 0 11 6.4" preserveAspectRatio="none"><path d="M0.8 0.8 L5.5 5.4 L10.2 0.8" fill="none" stroke="#7d8798" stroke-width="1.3" stroke-linecap="round" stroke-linejoin="round"/></svg>
<div style="position:absolute;top:437.15px;line-height:20px;height:20px;white-space:pre;font-size:13.2px;font-weight:400;color:#3a4558;font-style:normal;letter-spacing:0.000px;-webkit-text-stroke:0.18px #3a4558;left:529.50px;">1</div>
<svg style="position:absolute;left:557.0px;top:443.1px;" width="11" height="6.4" viewBox="0 0 11 6.4" preserveAspectRatio="none"><path d="M0.8 0.8 L5.5 5.4 L10.2 0.8" fill="none" stroke="#7d8798" stroke-width="1.3" stroke-linecap="round" stroke-linejoin="round"/></svg>
<div style="position:absolute;top:474.25px;line-height:20px;height:20px;white-space:pre;font-size:13.2px;font-weight:400;color:#3a4558;font-style:normal;letter-spacing:0.058px;-webkit-text-stroke:0.18px #3a4558;left:328.00px;">Poids net/unité (gr) :</div>
<div style="position:absolute;top:474.25px;line-height:20px;height:20px;white-space:pre;font-size:13.2px;font-weight:400;color:#333c4e;font-style:normal;letter-spacing:0.114px;-webkit-text-stroke:0.42px #333c4e;left:454.50px;">280</div>
<div style="position:absolute;top:474.25px;line-height:20px;height:20px;white-space:pre;font-size:13.2px;font-weight:400;color:#8791a3;font-style:normal;letter-spacing:0.023px;-webkit-text-stroke:0.18px #8791a3;left:513.50px;">/ 1000 X</div>
<svg style="position:absolute;left:699.8px;top:480.20000000000005px;" width="8.3" height="7.6" viewBox="0 0 9 9" preserveAspectRatio="none"><rect x="0.7" y="0.7" width="7.6" height="7.6" fill="none" stroke="#5f6877" stroke-width="1.05"/><rect x="3.5" y="3.5" width="2" height="2" fill="#5f6877"/></svg>
<div style="position:absolute;top:474.25px;line-height:20px;height:20px;white-space:pre;font-size:13.2px;font-weight:400;color:#3a4558;font-style:normal;letter-spacing:-0.029px;-webkit-text-stroke:0.18px #3a4558;left:713.00px;">Unités :</div>
<div style="position:absolute;top:474.25px;line-height:20px;height:20px;white-space:pre;font-size:13.2px;font-weight:400;color:#333c4e;font-style:normal;letter-spacing:-0.260px;-webkit-text-stroke:0.42px #333c4e;left:763.00px;">42168</div>
<div style="position:absolute;top:474.25px;line-height:20px;height:20px;white-space:pre;font-size:13.2px;font-weight:400;color:#3a4558;font-style:normal;letter-spacing:0.000px;-webkit-text-stroke:0.18px #3a4558;left:881.00px;">=</div>
<svg style="position:absolute;left:971.5px;top:476.6px;" width="13.5" height="14" viewBox="0 0 13.5 14" preserveAspectRatio="none"><path d="M1 1.2 H12.5" stroke="#3b3b3b" stroke-width="1.3"/><rect x="0" y="0" width="2" height="2.6" fill="#444"/><rect x="11.5" y="0" width="2" height="2.6" fill="#444"/><circle cx="6.75" cy="3.4" r="1.9" fill="#f2b27a"/><path d="M2 1.6 L5 6 H8.5 L11.5 1.6" fill="none" stroke="#f2b27a" stroke-width="1.5"/><path d="M4.6 5.6 H8.9 L9.6 10.6 H3.9 Z" fill="#e2482d"/><path d="M4.2 10.4 L2.8 13.6 M9.3 10.4 L10.7 13.6" stroke="#f2b27a" stroke-width="1.6"/></svg>
<div style="position:absolute;top:474.25px;line-height:20px;height:20px;white-space:pre;font-size:13.2px;font-weight:400;color:#3a4558;font-style:normal;letter-spacing:-0.366px;-webkit-text-stroke:0.18px #3a4558;left:991.20px;">Poids (Kg)</div>
<div style="position:absolute;top:474.25px;line-height:20px;height:20px;white-space:pre;font-size:13.0px;font-weight:400;color:#333c4e;font-style:normal;letter-spacing:-0.562px;word-spacing:-1.6px;-webkit-text-stroke:0.42px #333c4e;left:1056.30px;">11 807,04</div>
<div style="position:absolute;top:504.25px;line-height:20px;height:20px;white-space:pre;font-size:13.2px;font-weight:400;color:#3a4558;font-style:normal;letter-spacing:0.049px;-webkit-text-stroke:0.18px #3a4558;left:328.00px;">Unités/colis</div>
<div style="position:absolute;top:504.25px;line-height:20px;height:20px;white-space:pre;font-size:13.2px;font-weight:400;color:#333c4e;font-style:normal;letter-spacing:0.352px;-webkit-text-stroke:0.42px #333c4e;left:403.00px;">24</div>
<svg style="position:absolute;left:589.8px;top:507.8px;" width="11.6" height="12.2" viewBox="0 0 13.5 13.5" preserveAspectRatio="none"><path d="M6.75 0.4 L13 3.2 L13 10.2 L6.75 13.1 L0.5 10.2 L0.5 3.2 Z" fill="#bb8560"/><path d="M6.75 0.4 L13 3.2 L6.75 6 L0.5 3.2 Z" fill="#d6a37c"/><path d="M6.75 6 V13.1 L13 10.2 V3.2 Z" fill="#a87250"/><path d="M3.4 1.9 L9.8 4.7 V7.2" fill="none" stroke="#e8c9a0" stroke-width="1.1"/></svg>
<div style="position:absolute;top:504.25px;line-height:20px;height:20px;white-space:pre;font-size:13.2px;font-weight:400;color:#3a4558;font-style:normal;letter-spacing:-0.252px;-webkit-text-stroke:0.18px #3a4558;left:608.50px;">Colis :</div>
<div style="position:absolute;top:504.25px;line-height:20px;height:20px;white-space:pre;font-size:13.2px;font-weight:400;color:#333c4e;font-style:normal;letter-spacing:-0.470px;-webkit-text-stroke:0.42px #333c4e;left:649.50px;">1757</div>
<div style="position:absolute;top:504.25px;line-height:20px;height:20px;white-space:pre;font-size:13.2px;font-weight:400;color:#3a4558;font-style:normal;letter-spacing:0.138px;-webkit-text-stroke:0.18px #3a4558;left:845.50px;">Unités/palette</div>
<div style="position:absolute;top:504.25px;line-height:20px;height:20px;white-space:pre;font-size:13.2px;font-weight:400;color:#333c4e;font-style:normal;letter-spacing:-0.727px;-webkit-text-stroke:0.42px #333c4e;left:935.50px;">2016</div>
<div style="position:absolute;top:504.25px;line-height:20px;height:20px;white-space:pre;font-size:13.2px;font-weight:400;color:#3a4558;font-style:normal;letter-spacing:-0.293px;-webkit-text-stroke:0.18px #3a4558;left:1104.00px;">Palettes :</div>
<div style="position:absolute;top:504.25px;line-height:20px;height:20px;white-space:pre;font-size:13.2px;font-weight:400;color:#333c4e;font-style:normal;letter-spacing:-0.581px;-webkit-text-stroke:0.42px #333c4e;left:1163.00px;">22</div>
<div  style="position:absolute;left:331px;top:534px;width:119px;height:31px;background:#6259e8;border-radius:5px;"></div>
<div  style="position:absolute;left:456px;top:534px;width:90px;height:31px;background:#6259e8;border-radius:5px;"></div>
<div  style="position:absolute;left:553px;top:534px;width:105px;height:31px;background:#6259e8;border-radius:5px;"></div>
<svg style="position:absolute;left:341.5px;top:543.2px;" width="15" height="11" viewBox="0 0 15 11" preserveAspectRatio="none"><path d="M1 5.8 L5.2 9.8 L14 1" fill="none" stroke="#fff" stroke-width="1.6" stroke-linecap="round" stroke-linejoin="round"/></svg>
<div style="position:absolute;top:540.95px;line-height:19px;height:19px;white-space:pre;font-size:12.9px;font-weight:700;color:#fff;font-style:normal;letter-spacing:-0.277px;left:363.00px;">Sauvegarder</div>
<svg style="position:absolute;left:466.5px;top:542px;" width="13.5" height="15" viewBox="0 0 13.5 15" preserveAspectRatio="none"><g fill="none" stroke="#fff" stroke-width="1.6" stroke-linecap="round" stroke-linejoin="round"><path d="M1.6 8.4 A5.2 5.2 0 1 0 6.8 3.2 H3.4"/><path d="M5.8 0.8 L3.2 3.2 L5.8 5.6"/></g></svg>
<div style="position:absolute;top:540.95px;line-height:19px;height:19px;white-space:pre;font-size:12.9px;font-weight:700;color:#fff;font-style:normal;letter-spacing:-0.324px;left:488.00px;">Annuler</div>
<svg style="position:absolute;left:563.5px;top:542px;" width="13" height="15" viewBox="0 0 13 15" preserveAspectRatio="none"><g fill="none" stroke="#fff" stroke-width="1.5" stroke-linecap="round" stroke-linejoin="round"><path d="M0.8 3.4 H12.2 M4.4 3.2 V1.6 Q4.4 0.8 5.2 0.8 H7.8 Q8.6 0.8 8.6 1.6 V3.2 M2 3.6 L2.6 13 Q2.7 14.2 3.9 14.2 H9.1 Q10.3 14.2 10.4 13 L11 3.6 M5.1 6.4 V11 M7.9 6.4 V11"/></g></svg>
<div style="position:absolute;top:540.95px;line-height:19px;height:19px;white-space:pre;font-size:12.9px;font-weight:700;color:#fff;font-style:normal;letter-spacing:-0.173px;left:583.80px;">Supprimer</div>
<div  style="position:absolute;left:328px;top:579px;width:1539px;height:520px;background:#fff;border-radius:4px 4px 0 0;"></div>
<div style="position:absolute;top:590.50px;line-height:39px;height:39px;white-space:pre;font-size:26.3px;font-weight:700;color:#2b3447;font-style:normal;letter-spacing:-0.093px;left:340.30px;">Planification du FSE par Article</div>
<div  style="position:absolute;left:1235px;top:594px;width:164.5px;height:28.5px;background:#f1f4f9;border-radius:4px;"></div>
<svg style="position:absolute;left:1249.8px;top:601.7px;" width="13.4" height="13.4" viewBox="0 0 13.4 13.4" preserveAspectRatio="none"><g fill="none" stroke="#596273" stroke-width="1.15" stroke-linecap="round"><circle cx="5.6" cy="5.6" r="4.7"/><path d="M9.1 9.1 L12.6 12.6"/><path d="M3.4 5.6 H7.8"/></g></svg>
<svg style="position:absolute;left:1290.8px;top:601.7px;" width="13.4" height="13.4" viewBox="0 0 13.4 13.4" preserveAspectRatio="none"><g fill="none" stroke="#596273" stroke-width="1.15" stroke-linecap="round"><circle cx="5.6" cy="5.6" r="4.7"/><path d="M9.1 9.1 L12.6 12.6"/><path d="M3.4 5.6 H7.8"/></g></svg>
<svg style="position:absolute;left:1331.8px;top:601.7px;" width="13.4" height="13.4" viewBox="0 0 13.4 13.4" preserveAspectRatio="none"><g fill="none" stroke="#596273" stroke-width="1.15" stroke-linecap="round"><circle cx="5.6" cy="5.6" r="4.7"/><path d="M9.1 9.1 L12.6 12.6"/></g></svg>
<svg style="position:absolute;left:1372.8px;top:601.7px;" width="13.4" height="13.4" viewBox="0 0 13.4 13.4" preserveAspectRatio="none"><g fill="none" stroke="#596273" stroke-width="1.15" stroke-linecap="round"><circle cx="5.6" cy="5.6" r="4.7"/><path d="M9.1 9.1 L12.6 12.6"/><path d="M3.4 5.6 H7.8"/><path d="M5.6 3.4 V7.8"/></g></svg>
<div style="position:absolute;top:600.25px;line-height:20px;height:20px;white-space:pre;font-size:13.1px;font-weight:400;color:#364052;font-style:normal;letter-spacing:-0.038px;-webkit-text-stroke:0.42px #364052;left:1614.80px;">Périodes</div>
<div  style="position:absolute;left:328px;top:639px;width:1539px;height:1px;background:#e3e8ef;"></div>
<div style="position:absolute;top:656.25px;line-height:20px;height:20px;white-space:pre;font-size:13.1px;font-weight:400;color:#364052;font-style:normal;letter-spacing:0.165px;-webkit-text-stroke:0.42px #364052;left:341.50px;">Association</div>
<div style="position:absolute;top:656.25px;line-height:20px;height:20px;white-space:pre;font-size:13.1px;font-weight:400;color:#364052;font-style:normal;letter-spacing:-0.182px;-webkit-text-stroke:0.42px #364052;left:856.80px;">Prévu</div>
<div style="position:absolute;top:656.25px;line-height:20px;height:20px;white-space:pre;font-size:13.1px;font-weight:400;color:#364052;font-style:normal;letter-spacing:-0.112px;-webkit-text-stroke:0.42px #364052;left:1041.80px;">Expédié</div>
<div style="position:absolute;top:656.25px;line-height:20px;height:20px;white-space:pre;font-size:13.1px;font-weight:400;color:#364052;font-style:normal;letter-spacing:0.273px;-webkit-text-stroke:0.42px #364052;left:1209.30px;">Total</div>
<div style="position:absolute;top:656.25px;line-height:20px;height:20px;white-space:pre;font-size:13.1px;font-weight:400;color:#364052;font-style:normal;letter-spacing:-0.022px;-webkit-text-stroke:0.42px #364052;left:1366.80px;">Solde</div>
<div  style="position:absolute;left:1673px;top:650px;width:67px;height:31px;background:#fff;border:1px solid #b3aff4;border-radius:5px;overflow:hidden;"></div>
<div style="position:absolute;left:1684px;top:656px;width:44.6px;height:20px;overflow:hidden;white-space:nowrap;font-size:13.2px;line-height:20px;letter-spacing:0.38px;color:#2f3849;">2025/50</div>
<svg style="position:absolute;left:1746.8px;top:659.5px;" width="13" height="10" viewBox="0 0 13 10" preserveAspectRatio="none"><path d="M1 5.4 L4.6 8.8 L12 1.2" fill="none" stroke="#3ccf72" stroke-width="1.15" stroke-linecap="round" stroke-linejoin="round"/></svg>
<div  style="position:absolute;left:1767.3px;top:650px;width:25.5px;height:31px;background:#fadde1;border-radius:4px;"></div>
<svg style="position:absolute;left:1774.8px;top:659.6px;" width="10" height="10" viewBox="0 0 10 10" preserveAspectRatio="none"><path d="M1 1 L9 9 M9 1 L1 9" fill="none" stroke="#dc2a3a" stroke-width="1.35" stroke-linecap="round"/></svg>
<svg style="position:absolute;left:1779.6px;top:661.8px;" width="16.8" height="20.6" viewBox="0 0 15 20" preserveAspectRatio="none"><path d="M4.4 10.6 V2.4 Q4.4 1 5.6 1 Q6.8 1 6.8 2.4 V7.6 Q6.9 6.6 7.9 6.6 Q9 6.6 9.1 7.9 Q9.3 7.1 10.2 7.1 Q11.3 7.1 11.4 8.5 Q11.6 7.9 12.4 7.9 Q13.6 8 13.6 9.6 V13.6 Q13.6 16.4 12.4 18.6 H5.6 Q4.4 16.4 2.2 13.8 Q0.6 12 1.4 11.2 Q2.4 10.2 4.4 12.2 Z" fill="#fff" stroke="#222" stroke-width="0.95" stroke-linejoin="round"/><path d="M6.9 8 V12 M9.2 8.4 V12 M11.4 9 V12" stroke="#222" stroke-width="0.8"/></svg>
<svg style="position:absolute;left:1830.5px;top:659px;" width="12" height="12" viewBox="0 0 12 12" preserveAspectRatio="none"><path d="M6 0.8 V11.2 M0.8 6 H11.2" stroke="#6259e8" stroke-width="1.15" stroke-linecap="round"/></svg>
<div  style="position:absolute;left:328px;top:691.2px;width:1539px;height:1px;background:#e3e8ef;"></div>
<div style="position:absolute;top:701.76px;line-height:19px;height:19px;white-space:pre;font-size:12.5px;font-weight:400;color:#333c4e;font-style:normal;letter-spacing:-0.320px;-webkit-text-stroke:0.4px #333c4e;left:689.50px;">TOTAL</div>
<div style="position:absolute;top:701.25px;line-height:20px;height:20px;white-space:pre;font-size:13.2px;font-weight:400;color:#333c4e;font-style:normal;letter-spacing:-0.013px;-webkit-text-stroke:0.42px #333c4e;right:1029.81px;text-align:right;">3505</div>
<div style="position:absolute;top:701.25px;line-height:20px;height:20px;white-space:pre;font-size:13.2px;font-weight:400;color:#333c4e;font-style:normal;letter-spacing:-0.013px;-webkit-text-stroke:0.42px #333c4e;right:831.61px;text-align:right;">1748</div>
<div style="position:absolute;top:701.25px;line-height:20px;height:20px;white-space:pre;font-size:13.2px;font-weight:400;color:#333c4e;font-style:normal;letter-spacing:-0.013px;-webkit-text-stroke:0.42px #333c4e;right:681.81px;text-align:right;">1748</div>
<div style="position:absolute;top:701.25px;line-height:20px;height:20px;white-space:pre;font-size:13.2px;font-weight:400;color:#333c4e;font-style:normal;letter-spacing:-0.013px;-webkit-text-stroke:0.42px #333c4e;right:519.81px;text-align:right;">1757</div>
<div  style="position:absolute;left:328px;top:728px;width:1539px;height:1px;background:#e3e8ef;"></div>
<div style="position:absolute;top:742.28px;line-height:16px;height:16px;white-space:pre;font-size:10.6px;font-weight:400;color:#b2156f;font-style:normal;letter-spacing:-0.137px;-webkit-text-stroke:0.25px #b2156f;left:341.20px;">#518</div>
<svg style="position:absolute;left:368px;top:742.5px;" width="10.2" height="13" viewBox="0 0 11 14" preserveAspectRatio="none"><rect x="0.3" y="0.3" width="10.4" height="13.4" rx="1.3" fill="#c00a78"/><g fill="#fff"><rect x="2" y="2.3" width="1.8" height="1.8" rx="0.3"/><rect x="4.6" y="2.3" width="1.8" height="1.8" rx="0.3"/><rect x="7.2" y="2.3" width="1.8" height="1.8" rx="0.3"/><rect x="2" y="5.6" width="1.8" height="1.8" rx="0.3"/><rect x="4.6" y="5.6" width="1.8" height="1.8" rx="0.3"/><rect x="7.2" y="5.6" width="1.8" height="1.8" rx="0.3"/><path d="M4 13.7 V11 Q4 9.6 5.5 9.6 Q7 9.6 7 11 V13.7 Z"/></g></svg>
<div style="position:absolute;top:740.66px;line-height:19px;height:19px;white-space:pre;font-size:12.5px;font-weight:400;color:#b2156f;font-style:normal;letter-spacing:-0.358px;-webkit-text-stroke:0.18px #b2156f;left:381.20px;">SVP AUVELAIS</div>
<div style="position:absolute;top:740.15px;line-height:20px;height:20px;white-space:pre;font-size:13.2px;font-weight:400;color:#3a4558;font-style:normal;letter-spacing:0.019px;-webkit-text-stroke:0.18px #3a4558;right:1029.78px;text-align:right;">21</div>
<div style="position:absolute;top:740.15px;line-height:20px;height:20px;white-space:pre;font-size:13.2px;font-weight:400;color:#3a4558;font-style:normal;letter-spacing:0.019px;-webkit-text-stroke:0.18px #3a4558;right:831.58px;text-align:right;">10</div>
<div style="position:absolute;top:740.15px;line-height:20px;height:20px;white-space:pre;font-size:13.2px;font-weight:400;color:#3a4558;font-style:normal;letter-spacing:0.019px;-webkit-text-stroke:0.18px #3a4558;right:681.78px;text-align:right;">10</div>
<div style="position:absolute;top:740.15px;line-height:20px;height:20px;white-space:pre;font-size:13.2px;font-weight:400;color:#e9a23b;font-style:italic;letter-spacing:0.998px;-webkit-text-stroke:0.18px #e9a23b;right:518.80px;text-align:right;">11</div>
<div  style="position:absolute;left:1423px;top:736.2px;width:374px;height:25.7px;background:#fff;border:1px dotted #aab2bf;border-radius:4px;"></div>
<div  style="position:absolute;left:328px;top:769px;width:1539px;height:1px;background:#e3e8ef;"></div>
<div style="position:absolute;top:783.28px;line-height:16px;height:16px;white-space:pre;font-size:10.6px;font-weight:400;color:#b2156f;font-style:normal;letter-spacing:-0.137px;-webkit-text-stroke:0.25px #b2156f;left:341.20px;">#519</div>
<svg style="position:absolute;left:368px;top:783.5px;" width="10.2" height="13" viewBox="0 0 11 14" preserveAspectRatio="none"><rect x="0.3" y="0.3" width="10.4" height="13.4" rx="1.3" fill="#c00a78"/><g fill="#fff"><rect x="2" y="2.3" width="1.8" height="1.8" rx="0.3"/><rect x="4.6" y="2.3" width="1.8" height="1.8" rx="0.3"/><rect x="7.2" y="2.3" width="1.8" height="1.8" rx="0.3"/><rect x="2" y="5.6" width="1.8" height="1.8" rx="0.3"/><rect x="4.6" y="5.6" width="1.8" height="1.8" rx="0.3"/><rect x="7.2" y="5.6" width="1.8" height="1.8" rx="0.3"/><path d="M4 13.7 V11 Q4 9.6 5.5 9.6 Q7 9.6 7 11 V13.7 Z"/></g></svg>
<div style="position:absolute;top:781.66px;line-height:19px;height:19px;white-space:pre;font-size:12.5px;font-weight:400;color:#b2156f;font-style:normal;letter-spacing:-0.509px;-webkit-text-stroke:0.18px #b2156f;left:381.20px;">LE FOUILLIS</div>
<div style="position:absolute;top:781.15px;line-height:20px;height:20px;white-space:pre;font-size:13.2px;font-weight:400;color:#3a4558;font-style:normal;letter-spacing:0.019px;-webkit-text-stroke:0.18px #3a4558;right:1029.78px;text-align:right;">21</div>
<div style="position:absolute;top:781.15px;line-height:20px;height:20px;white-space:pre;font-size:13.2px;font-weight:400;color:#3a4558;font-style:normal;letter-spacing:0.019px;-webkit-text-stroke:0.18px #3a4558;right:831.58px;text-align:right;">10</div>
<div style="position:absolute;top:781.15px;line-height:20px;height:20px;white-space:pre;font-size:13.2px;font-weight:400;color:#3a4558;font-style:normal;letter-spacing:0.019px;-webkit-text-stroke:0.18px #3a4558;right:681.78px;text-align:right;">10</div>
<div style="position:absolute;top:781.15px;line-height:20px;height:20px;white-space:pre;font-size:13.2px;font-weight:400;color:#e9a23b;font-style:italic;letter-spacing:0.998px;-webkit-text-stroke:0.18px #e9a23b;right:518.80px;text-align:right;">11</div>
<div  style="position:absolute;left:1423px;top:777.2px;width:374px;height:25.7px;background:#fff;border:1px dotted #aab2bf;border-radius:4px;"></div>
<div  style="position:absolute;left:328px;top:810px;width:1539px;height:1px;background:#e3e8ef;"></div>
<div style="position:absolute;top:824.28px;line-height:16px;height:16px;white-space:pre;font-size:10.6px;font-weight:400;color:#b2156f;font-style:normal;letter-spacing:-0.137px;-webkit-text-stroke:0.25px #b2156f;left:341.20px;">#520</div>
<svg style="position:absolute;left:368px;top:824.5px;" width="10.2" height="13" viewBox="0 0 11 14" preserveAspectRatio="none"><rect x="0.3" y="0.3" width="10.4" height="13.4" rx="1.3" fill="#c00a78"/><g fill="#fff"><rect x="2" y="2.3" width="1.8" height="1.8" rx="0.3"/><rect x="4.6" y="2.3" width="1.8" height="1.8" rx="0.3"/><rect x="7.2" y="2.3" width="1.8" height="1.8" rx="0.3"/><rect x="2" y="5.6" width="1.8" height="1.8" rx="0.3"/><rect x="4.6" y="5.6" width="1.8" height="1.8" rx="0.3"/><rect x="7.2" y="5.6" width="1.8" height="1.8" rx="0.3"/><path d="M4 13.7 V11 Q4 9.6 5.5 9.6 Q7 9.6 7 11 V13.7 Z"/></g></svg>
<div style="position:absolute;top:822.66px;line-height:19px;height:19px;white-space:pre;font-size:12.5px;font-weight:400;color:#b2156f;font-style:normal;letter-spacing:-0.547px;-webkit-text-stroke:0.18px #b2156f;left:381.20px;">SVP BIESME</div>
<div style="position:absolute;top:822.15px;line-height:20px;height:20px;white-space:pre;font-size:13.2px;font-weight:400;color:#3a4558;font-style:normal;letter-spacing:0.019px;-webkit-text-stroke:0.18px #3a4558;right:1029.78px;text-align:right;">17</div>
<div style="position:absolute;top:822.15px;line-height:20px;height:20px;white-space:pre;font-size:13.2px;font-weight:400;color:#3a4558;font-style:normal;letter-spacing:0.000px;-webkit-text-stroke:0.18px #3a4558;right:831.60px;text-align:right;">8</div>
<div style="position:absolute;top:822.15px;line-height:20px;height:20px;white-space:pre;font-size:13.2px;font-weight:400;color:#3a4558;font-style:normal;letter-spacing:0.000px;-webkit-text-stroke:0.18px #3a4558;right:681.80px;text-align:right;">8</div>
<div style="position:absolute;top:822.15px;line-height:20px;height:20px;white-space:pre;font-size:13.2px;font-weight:400;color:#e9a23b;font-style:italic;letter-spacing:0.000px;-webkit-text-stroke:0.18px #e9a23b;right:519.80px;text-align:right;">9</div>
<div  style="position:absolute;left:1423px;top:818.2px;width:374px;height:25.7px;background:#fff;border:1px dotted #aab2bf;border-radius:4px;"></div>
<div  style="position:absolute;left:328px;top:851px;width:1539px;height:1px;background:#e3e8ef;"></div>
<div style="position:absolute;top:865.28px;line-height:16px;height:16px;white-space:pre;font-size:10.6px;font-weight:400;color:#b2156f;font-style:normal;letter-spacing:-0.137px;-webkit-text-stroke:0.25px #b2156f;left:341.20px;">#550</div>
<svg style="position:absolute;left:368px;top:865.5px;" width="10.2" height="13" viewBox="0 0 11 14" preserveAspectRatio="none"><rect x="0.3" y="0.3" width="10.4" height="13.4" rx="1.3" fill="#c00a78"/><g fill="#fff"><rect x="2" y="2.3" width="1.8" height="1.8" rx="0.3"/><rect x="4.6" y="2.3" width="1.8" height="1.8" rx="0.3"/><rect x="7.2" y="2.3" width="1.8" height="1.8" rx="0.3"/><rect x="2" y="5.6" width="1.8" height="1.8" rx="0.3"/><rect x="4.6" y="5.6" width="1.8" height="1.8" rx="0.3"/><rect x="7.2" y="5.6" width="1.8" height="1.8" rx="0.3"/><path d="M4 13.7 V11 Q4 9.6 5.5 9.6 Q7 9.6 7 11 V13.7 Z"/></g></svg>
<div style="position:absolute;top:863.66px;line-height:19px;height:19px;white-space:pre;font-size:12.5px;font-weight:400;color:#b2156f;font-style:normal;letter-spacing:-0.577px;-webkit-text-stroke:0.18px #b2156f;left:381.20px;">SVP JAMBES</div>
<div style="position:absolute;top:863.15px;line-height:20px;height:20px;white-space:pre;font-size:13.2px;font-weight:400;color:#3a4558;font-style:normal;letter-spacing:0.014px;-webkit-text-stroke:0.18px #3a4558;right:1029.79px;text-align:right;">100</div>
<div style="position:absolute;top:863.15px;line-height:20px;height:20px;white-space:pre;font-size:13.2px;font-weight:400;color:#3a4558;font-style:normal;letter-spacing:0.019px;-webkit-text-stroke:0.18px #3a4558;right:831.58px;text-align:right;">50</div>
<div style="position:absolute;top:863.15px;line-height:20px;height:20px;white-space:pre;font-size:13.2px;font-weight:400;color:#3a4558;font-style:normal;letter-spacing:0.019px;-webkit-text-stroke:0.18px #3a4558;right:681.78px;text-align:right;">50</div>
<div style="position:absolute;top:863.15px;line-height:20px;height:20px;white-space:pre;font-size:13.2px;font-weight:400;color:#e9a23b;font-style:italic;letter-spacing:0.352px;-webkit-text-stroke:0.18px #e9a23b;right:519.45px;text-align:right;">50</div>
<div  style="position:absolute;left:1423px;top:859.2px;width:374px;height:25.7px;background:#fff;border:1px dotted #aab2bf;border-radius:4px;"></div>
<div  style="position:absolute;left:328px;top:892px;width:1539px;height:1px;background:#e3e8ef;"></div>
<div style="position:absolute;top:906.28px;line-height:16px;height:16px;white-space:pre;font-size:10.6px;font-weight:400;color:#b2156f;font-style:normal;letter-spacing:-0.137px;-webkit-text-stroke:0.25px #b2156f;left:341.20px;">#551</div>
<svg style="position:absolute;left:368px;top:906.5px;" width="10.2" height="13" viewBox="0 0 11 14" preserveAspectRatio="none"><rect x="0.3" y="0.3" width="10.4" height="13.4" rx="1.3" fill="#c00a78"/><g fill="#fff"><rect x="2" y="2.3" width="1.8" height="1.8" rx="0.3"/><rect x="4.6" y="2.3" width="1.8" height="1.8" rx="0.3"/><rect x="7.2" y="2.3" width="1.8" height="1.8" rx="0.3"/><rect x="2" y="5.6" width="1.8" height="1.8" rx="0.3"/><rect x="4.6" y="5.6" width="1.8" height="1.8" rx="0.3"/><rect x="7.2" y="5.6" width="1.8" height="1.8" rx="0.3"/><path d="M4 13.7 V11 Q4 9.6 5.5 9.6 Q7 9.6 7 11 V13.7 Z"/></g></svg>
<div style="position:absolute;top:904.66px;line-height:19px;height:19px;white-space:pre;font-size:12.5px;font-weight:400;color:#b2156f;font-style:normal;letter-spacing:-0.026px;-webkit-text-stroke:0.18px #b2156f;left:381.20px;">SVP MALONNE</div>
<div style="position:absolute;top:904.15px;line-height:20px;height:20px;white-space:pre;font-size:13.2px;font-weight:400;color:#3a4558;font-style:normal;letter-spacing:0.019px;-webkit-text-stroke:0.18px #3a4558;right:1029.78px;text-align:right;">29</div>
<div style="position:absolute;top:904.15px;line-height:20px;height:20px;white-space:pre;font-size:13.2px;font-weight:400;color:#3a4558;font-style:normal;letter-spacing:0.019px;-webkit-text-stroke:0.18px #3a4558;right:831.58px;text-align:right;">14</div>
<div style="position:absolute;top:904.15px;line-height:20px;height:20px;white-space:pre;font-size:13.2px;font-weight:400;color:#3a4558;font-style:normal;letter-spacing:0.019px;-webkit-text-stroke:0.18px #3a4558;right:681.78px;text-align:right;">14</div>
<div style="position:absolute;top:904.15px;line-height:20px;height:20px;white-space:pre;font-size:13.2px;font-weight:400;color:#e9a23b;font-style:italic;letter-spacing:0.352px;-webkit-text-stroke:0.18px #e9a23b;right:519.45px;text-align:right;">15</div>
<div  style="position:absolute;left:1423px;top:900.2px;width:374px;height:25.7px;background:#fff;border:1px dotted #aab2bf;border-radius:4px;"></div>
<div  style="position:absolute;left:328px;top:933px;width:1539px;height:1px;background:#e3e8ef;"></div>
<div style="position:absolute;top:947.28px;line-height:16px;height:16px;white-space:pre;font-size:10.6px;font-weight:400;color:#b2156f;font-style:normal;letter-spacing:-0.137px;-webkit-text-stroke:0.25px #b2156f;left:341.20px;">#552</div>
<svg style="position:absolute;left:368px;top:947.5px;" width="10.2" height="13" viewBox="0 0 11 14" preserveAspectRatio="none"><rect x="0.3" y="0.3" width="10.4" height="13.4" rx="1.3" fill="#c00a78"/><g fill="#fff"><rect x="2" y="2.3" width="1.8" height="1.8" rx="0.3"/><rect x="4.6" y="2.3" width="1.8" height="1.8" rx="0.3"/><rect x="7.2" y="2.3" width="1.8" height="1.8" rx="0.3"/><rect x="2" y="5.6" width="1.8" height="1.8" rx="0.3"/><rect x="4.6" y="5.6" width="1.8" height="1.8" rx="0.3"/><rect x="7.2" y="5.6" width="1.8" height="1.8" rx="0.3"/><path d="M4 13.7 V11 Q4 9.6 5.5 9.6 Q7 9.6 7 11 V13.7 Z"/></g></svg>
<div style="position:absolute;top:945.66px;line-height:19px;height:19px;white-space:pre;font-size:12.5px;font-weight:400;color:#b2156f;font-style:normal;letter-spacing:-0.116px;-webkit-text-stroke:0.18px #b2156f;left:381.20px;">SVP MORIALME</div>
<div style="position:absolute;top:945.15px;line-height:20px;height:20px;white-space:pre;font-size:13.2px;font-weight:400;color:#3a4558;font-style:normal;letter-spacing:0.019px;-webkit-text-stroke:0.18px #3a4558;right:1029.78px;text-align:right;">29</div>
<div style="position:absolute;top:945.15px;line-height:20px;height:20px;white-space:pre;font-size:13.2px;font-weight:400;color:#3a4558;font-style:normal;letter-spacing:0.019px;-webkit-text-stroke:0.18px #3a4558;right:831.58px;text-align:right;">14</div>
<div style="position:absolute;top:945.15px;line-height:20px;height:20px;white-space:pre;font-size:13.2px;font-weight:400;color:#3a4558;font-style:normal;letter-spacing:0.019px;-webkit-text-stroke:0.18px #3a4558;right:681.78px;text-align:right;">14</div>
<div style="position:absolute;top:945.15px;line-height:20px;height:20px;white-space:pre;font-size:13.2px;font-weight:400;color:#e9a23b;font-style:italic;letter-spacing:0.352px;-webkit-text-stroke:0.18px #e9a23b;right:519.45px;text-align:right;">15</div>
<div  style="position:absolute;left:1423px;top:941.2px;width:374px;height:25.7px;background:#fff;border:1px dotted #aab2bf;border-radius:4px;"></div>
<div  style="position:absolute;left:328px;top:974px;width:1539px;height:1px;background:#e3e8ef;"></div>
<div style="position:absolute;top:988.28px;line-height:16px;height:16px;white-space:pre;font-size:10.6px;font-weight:400;color:#b2156f;font-style:normal;letter-spacing:-0.137px;-webkit-text-stroke:0.25px #b2156f;left:341.20px;">#553</div>
<svg style="position:absolute;left:368px;top:988.5px;" width="10.2" height="13" viewBox="0 0 11 14" preserveAspectRatio="none"><rect x="0.3" y="0.3" width="10.4" height="13.4" rx="1.3" fill="#c00a78"/><g fill="#fff"><rect x="2" y="2.3" width="1.8" height="1.8" rx="0.3"/><rect x="4.6" y="2.3" width="1.8" height="1.8" rx="0.3"/><rect x="7.2" y="2.3" width="1.8" height="1.8" rx="0.3"/><rect x="2" y="5.6" width="1.8" height="1.8" rx="0.3"/><rect x="4.6" y="5.6" width="1.8" height="1.8" rx="0.3"/><rect x="7.2" y="5.6" width="1.8" height="1.8" rx="0.3"/><path d="M4 13.7 V11 Q4 9.6 5.5 9.6 Q7 9.6 7 11 V13.7 Z"/></g></svg>
<div style="position:absolute;top:986.66px;line-height:19px;height:19px;white-space:pre;font-size:12.5px;font-weight:400;color:#b2156f;font-style:normal;letter-spacing:-0.602px;-webkit-text-stroke:0.18px #b2156f;left:381.20px;">SVP JEMEPPE SUR SAMBRE</div>
<div style="position:absolute;top:986.15px;line-height:20px;height:20px;white-space:pre;font-size:13.2px;font-weight:400;color:#3a4558;font-style:normal;letter-spacing:0.019px;-webkit-text-stroke:0.18px #3a4558;right:1029.78px;text-align:right;">46</div>
<div style="position:absolute;top:986.15px;line-height:20px;height:20px;white-space:pre;font-size:13.2px;font-weight:400;color:#3a4558;font-style:normal;letter-spacing:0.019px;-webkit-text-stroke:0.18px #3a4558;right:831.58px;text-align:right;">23</div>
<div style="position:absolute;top:986.15px;line-height:20px;height:20px;white-space:pre;font-size:13.2px;font-weight:400;color:#3a4558;font-style:normal;letter-spacing:0.019px;-webkit-text-stroke:0.18px #3a4558;right:681.78px;text-align:right;">23</div>
<div style="position:absolute;top:986.15px;line-height:20px;height:20px;white-space:pre;font-size:13.2px;font-weight:400;color:#e9a23b;font-style:italic;letter-spacing:0.352px;-webkit-text-stroke:0.18px #e9a23b;right:519.45px;text-align:right;">23</div>
<div  style="position:absolute;left:1423px;top:982.2px;width:374px;height:25.7px;background:#fff;border:1px dotted #aab2bf;border-radius:4px;"></div>
<div  style="position:absolute;left:328px;top:1015px;width:1539px;height:1px;background:#e3e8ef;"></div>
<div style="position:absolute;top:1029.28px;line-height:16px;height:16px;white-space:pre;font-size:10.6px;font-weight:400;color:#b2156f;font-style:normal;letter-spacing:-0.137px;-webkit-text-stroke:0.25px #b2156f;left:341.20px;">#554</div>
<svg style="position:absolute;left:368px;top:1029.5px;" width="10.2" height="13" viewBox="0 0 11 14" preserveAspectRatio="none"><rect x="0.3" y="0.3" width="10.4" height="13.4" rx="1.3" fill="#c00a78"/><g fill="#fff"><rect x="2" y="2.3" width="1.8" height="1.8" rx="0.3"/><rect x="4.6" y="2.3" width="1.8" height="1.8" rx="0.3"/><rect x="7.2" y="2.3" width="1.8" height="1.8" rx="0.3"/><rect x="2" y="5.6" width="1.8" height="1.8" rx="0.3"/><rect x="4.6" y="5.6" width="1.8" height="1.8" rx="0.3"/><rect x="7.2" y="5.6" width="1.8" height="1.8" rx="0.3"/><path d="M4 13.7 V11 Q4 9.6 5.5 9.6 Q7 9.6 7 11 V13.7 Z"/></g></svg>
<div style="position:absolute;top:1027.66px;line-height:19px;height:19px;white-space:pre;font-size:12.5px;font-weight:400;color:#b2156f;font-style:normal;letter-spacing:0.037px;-webkit-text-stroke:0.18px #b2156f;left:381.20px;">UNE MAIN TENDUE</div>
<div style="position:absolute;top:1027.15px;line-height:20px;height:20px;white-space:pre;font-size:13.2px;font-weight:400;color:#3a4558;font-style:normal;letter-spacing:0.014px;-webkit-text-stroke:0.18px #3a4558;right:1029.79px;text-align:right;">417</div>
<div style="position:absolute;top:1027.15px;line-height:20px;height:20px;white-space:pre;font-size:13.2px;font-weight:400;color:#3a4558;font-style:normal;letter-spacing:0.014px;-webkit-text-stroke:0.18px #3a4558;right:831.59px;text-align:right;">209</div>
<div style="position:absolute;top:1027.15px;line-height:20px;height:20px;white-space:pre;font-size:13.2px;font-weight:400;color:#3a4558;font-style:normal;letter-spacing:0.014px;-webkit-text-stroke:0.18px #3a4558;right:681.79px;text-align:right;">209</div>
<div style="position:absolute;top:1027.15px;line-height:20px;height:20px;white-space:pre;font-size:13.2px;font-weight:400;color:#e9a23b;font-style:italic;letter-spacing:0.214px;-webkit-text-stroke:0.18px #e9a23b;right:519.59px;text-align:right;">208</div>
<div  style="position:absolute;left:1423px;top:1023.2px;width:374px;height:25.7px;background:#fff;border:1px dotted #aab2bf;border-radius:4px;"></div>
<div  style="position:absolute;left:328px;top:1056px;width:1539px;height:1px;background:#e3e8ef;"></div>
<div style="position:absolute;top:1070.28px;line-height:16px;height:16px;white-space:pre;font-size:10.6px;font-weight:400;color:#b2156f;font-style:normal;letter-spacing:-0.137px;-webkit-text-stroke:0.25px #b2156f;left:341.20px;">#556</div>
<svg style="position:absolute;left:368px;top:1070.5px;" width="10.2" height="13" viewBox="0 0 11 14" preserveAspectRatio="none"><rect x="0.3" y="0.3" width="10.4" height="13.4" rx="1.3" fill="#c00a78"/><g fill="#fff"><rect x="2" y="2.3" width="1.8" height="1.8" rx="0.3"/><rect x="4.6" y="2.3" width="1.8" height="1.8" rx="0.3"/><rect x="7.2" y="2.3" width="1.8" height="1.8" rx="0.3"/><rect x="2" y="5.6" width="1.8" height="1.8" rx="0.3"/><rect x="4.6" y="5.6" width="1.8" height="1.8" rx="0.3"/><rect x="7.2" y="5.6" width="1.8" height="1.8" rx="0.3"/><path d="M4 13.7 V11 Q4 9.6 5.5 9.6 Q7 9.6 7 11 V13.7 Z"/></g></svg>
<div style="position:absolute;top:1068.66px;line-height:19px;height:19px;white-space:pre;font-size:12.5px;font-weight:400;color:#b2156f;font-style:normal;letter-spacing:-0.355px;-webkit-text-stroke:0.18px #b2156f;left:381.20px;">SVP SALZINNES</div>
<div style="position:absolute;top:1068.15px;line-height:20px;height:20px;white-space:pre;font-size:13.2px;font-weight:400;color:#3a4558;font-style:normal;letter-spacing:0.014px;-webkit-text-stroke:0.18px #3a4558;right:1029.79px;text-align:right;">208</div>
<div style="position:absolute;top:1068.15px;line-height:20px;height:20px;white-space:pre;font-size:13.2px;font-weight:400;color:#3a4558;font-style:normal;letter-spacing:0.014px;-webkit-text-stroke:0.18px #3a4558;right:831.59px;text-align:right;">104</div>
<div style="position:absolute;top:1068.15px;line-height:20px;height:20px;white-space:pre;font-size:13.2px;font-weight:400;color:#3a4558;font-style:normal;letter-spacing:0.014px;-webkit-text-stroke:0.18px #3a4558;right:681.79px;text-align:right;">104</div>
<div style="position:absolute;top:1068.15px;line-height:20px;height:20px;white-space:pre;font-size:13.2px;font-weight:400;color:#e9a23b;font-style:italic;letter-spacing:0.214px;-webkit-text-stroke:0.18px #e9a23b;right:519.59px;text-align:right;">104</div>
<div  style="position:absolute;left:1423px;top:1064.2px;width:374px;height:25.7px;background:#fff;border:1px dotted #aab2bf;border-radius:4px;"></div>
<div  style="position:absolute;left:1841.5px;top:1021px;width:32px;height:32px;background:#fff;border:1px solid #cbc7f7;border-radius:50%;"></div>
<svg style="position:absolute;left:1851.5px;top:1030.5px;" width="12.5" height="13.5" viewBox="0 0 12.5 13.5" preserveAspectRatio="none"><g fill="none" stroke="#6259e8" stroke-width="1.25" stroke-linecap="round" stroke-linejoin="round"><rect x="0.8" y="2" width="10.9" height="10.6" rx="1.8"/><path d="M0.8 5.6 H11.7 M3.8 0.7 V3 M8.7 0.7 V3"/></g></svg>
<div  style="position:absolute;left:0px;top:0px;width:1920px;height:64px;background:#d3e3fd;"></div>
<div  style="position:absolute;left:8px;top:8px;width:35px;height:34px;background:#e9f0fd;border-radius:10px;"></div>
<svg style="position:absolute;left:20.4px;top:20.9px;" width="11" height="9.2" viewBox="0 0 12 10" preserveAspectRatio="none"><path d="M1.5 2.5 L6 7 L10.5 2.5" fill="none" stroke="#1f1f1f" stroke-width="2.1" stroke-linecap="round" stroke-linejoin="round"/></svg>
<svg style="position:absolute;left:40px;top:8px;" width="310" height="42" viewBox="0 0 310 42" preserveAspectRatio="none"><path d="M0 42 Q10 42 10 32 L10 10 Q10 0 20 0 L290 0 Q300 0 300 10 L300 32 Q300 42 310 42 Z" fill="#ffffff"/></svg>
<svg style="position:absolute;left:60px;top:14px;" width="20" height="22" viewBox="0 0 20 22" preserveAspectRatio="none"><path d="M10 0.5 L19.3 3.8 L17.9 16.2 L10 21 L2.1 16.2 L0.7 3.8 Z" fill="#111"/><path d="M10 3.2 L4.6 15.6 L6.7 15.6 L7.8 12.8 L12.2 12.8 L13.3 15.6 L15.4 15.6 Z M10 7.4 L11.5 11 L8.5 11 Z" fill="#fff" fill-rule="evenodd"/></svg>
<div style="position:absolute;top:15.13px;line-height:22px;height:22px;white-space:pre;font-size:15px;font-weight:400;color:#1f1f1f;font-style:normal;letter-spacing:0.095px;-webkit-text-stroke:0.18px #1f1f1f;left:90.00px;">foodbanks-stock-app</div>
<svg style="position:absolute;left:314px;top:19px;" width="12" height="12" viewBox="0 0 12 12" preserveAspectRatio="none"><path d="M1.5 1.5 L10.5 10.5 M10.5 1.5 L1.5 10.5" stroke="#1f1f1f" stroke-width="1.9" stroke-linecap="round"/></svg>
<svg style="position:absolute;left:359px;top:18px;" width="14" height="14" viewBox="0 0 14 14" preserveAspectRatio="none"><path d="M7 1 V13 M1 7 H13" stroke="#1f1f1f" stroke-width="1.9" stroke-linecap="round"/></svg>
<svg style="position:absolute;left:1770px;top:22px;" width="15" height="3" viewBox="0 0 15 3" preserveAspectRatio="none"><path d="M0.5 1.5 H14.5" stroke="#1f1f1f" stroke-width="1.3"/></svg>
<svg style="position:absolute;left:1826px;top:17px;" width="14" height="14" viewBox="0 0 14 14" preserveAspectRatio="none"><rect x="0.8" y="3.2" width="9.8" height="9.8" rx="2" fill="none" stroke="#1f1f1f" stroke-width="1.3"/><path d="M3.6 3 V2.6 Q3.6 0.8 5.4 0.8 H11 Q13.2 0.8 13.2 3 V8.6 Q13.2 10.4 11.4 10.4 H11" fill="none" stroke="#1f1f1f" stroke-width="1.3"/></svg>
<svg style="position:absolute;left:1884px;top:17px;" width="14" height="14" viewBox="0 0 14 14" preserveAspectRatio="none"><path d="M0.8 0.8 L13.2 13.2 M13.2 0.8 L0.8 13.2" stroke="#1f1f1f" stroke-width="1.3"/></svg>
<div  style="position:absolute;left:0px;top:50px;width:1920px;height:59px;background:#fff;border-radius:10px 10px 0 0;border-bottom:1px solid #dcdde1;"></div>
<svg style="position:absolute;left:20px;top:71.8px;" width="15.3" height="14.4" viewBox="0 0 17 16" preserveAspectRatio="none"><path d="M16 8 H2 M8 1.5 L1.5 8 L8 14.5" fill="none" stroke="#474747" stroke-width="2" stroke-linecap="round" stroke-linejoin="round"/></svg>
<svg style="position:absolute;left:64.7px;top:71.8px;" width="15.3" height="14.4" viewBox="0 0 17 16" preserveAspectRatio="none"><path d="M1 8 H15 M9 1.5 L15.5 8 L9 14.5" fill="none" stroke="#b4b8bf" stroke-width="2" stroke-linecap="round" stroke-linejoin="round"/></svg>
<svg style="position:absolute;left:109px;top:70px;" width="18" height="18" viewBox="0 0 18 18" preserveAspectRatio="none"><path d="M15.2 9 A6.3 6.3 0 1 1 13.1 4.3" fill="none" stroke="#474747" stroke-width="2" stroke-linecap="round"/><path d="M15.6 1.6 V6.4 H10.8 Z" fill="#474747"/></svg>
<div  style="position:absolute;left:152px;top:58.5px;width:1460px;height:41px;background:#edf2fa;border-radius:21px;"></div>
<div  style="position:absolute;left:157px;top:65px;width:28px;height:28px;background:#fff;border-radius:14px;"></div>
<svg style="position:absolute;left:163px;top:71px;" width="16" height="16" viewBox="0 0 16 16" preserveAspectRatio="none"><g fill="none" stroke="#1f1f1f" stroke-width="1.8" stroke-linecap="round"><circle cx="4.2" cy="4.4" r="2.1"/><path d="M9 4.4 H14.5"/><circle cx="11.8" cy="11.6" r="2.1"/><path d="M1.5 11.6 H7"/></g></svg>
<div style="position:absolute;top:67.10px;line-height:26px;height:26px;white-space:pre;font-size:17.3px;font-weight:400;color:#1f1f1f;font-style:normal;letter-spacing:0.066px;left:197.00px;">dev.stock.foodbanksit.be</div>
<div style="position:absolute;top:67.10px;line-height:26px;height:26px;white-space:pre;font-size:17.3px;font-weight:400;color:#4b4e52;font-style:normal;letter-spacing:0.362px;left:388.00px;">/stock/app/fr-BE/fead/planning/article</div>
<svg style="position:absolute;left:1532px;top:69px;" width="20" height="20" viewBox="0 0 20 20" preserveAspectRatio="none"><g fill="none" stroke="#474747" stroke-width="2" stroke-linecap="round"><circle cx="8" cy="8" r="5.6"/><path d="M12.3 12.3 L18 18"/><path d="M5.4 8 H10.6" stroke-width="1.7"/></g></svg>
<svg style="position:absolute;left:1572px;top:68px;" width="21" height="21" viewBox="0 0 21 21" preserveAspectRatio="none"><path d="M10.5 2.2 L13 7.9 L19.2 8.5 L14.5 12.6 L15.9 18.7 L10.5 15.5 L5.1 18.7 L6.5 12.6 L1.8 8.5 L8 7.9 Z" fill="none" stroke="#474747" stroke-width="1.9" stroke-linejoin="round"/></svg>
<svg style="position:absolute;left:1636px;top:71px;" width="20" height="16" viewBox="0 0 20 16" preserveAspectRatio="none"><rect x="0.5" y="1" width="19" height="11" fill="#ececec" stroke="#dcdcdc" stroke-width="0.8" stroke-dasharray="2 1.5"/><path d="M5 4 L9 6 M11 7 L15 14" stroke="#9a9a9a" stroke-width="1.6" stroke-linecap="round"/><path d="M12 3 L14 5 M16 4 L15 7" stroke="#bdbdbd" stroke-width="1.2"/></svg>
<svg style="position:absolute;left:1680px;top:69px;" width="21" height="21" viewBox="0 0 21 21" preserveAspectRatio="none"><rect width="21" height="21" fill="#2fb344"/><rect x="0.5" y="0.5" width="20" height="20" fill="none" stroke="#4cc45e" stroke-width="1"/><path d="M4.2 10.8 L8.6 15 L17 5.6" fill="none" stroke="#fff" stroke-width="3.2" stroke-linecap="square" stroke-linejoin="miter"/></svg>
<svg style="position:absolute;left:1727px;top:71px;" width="17" height="17" viewBox="0 0 17 17" preserveAspectRatio="none"><defs><radialGradient id="rg" cx="40%" cy="35%" r="65%"><stop offset="0" stop-color="#f03a6a"/><stop offset="1" stop-color="#d81b50"/></radialGradient></defs><circle cx="8.5" cy="8.5" r="8" fill="url(#rg)"/></svg>
<svg style="position:absolute;left:1770px;top:66px;" width="24" height="24" viewBox="0 0 24 24" preserveAspectRatio="none"><path d="M4.4 6.1 H16.4 Q17.9 6.1 17.9 7.6 V19.3 Q17.9 20.8 16.4 20.8 H4.4 Q2.9 20.8 2.9 19.3 V16.7 A3 3 0 0 0 2.9 10.7 V7.6 Q2.9 6.1 4.4 6.1 Z" fill="none" stroke="#474747" stroke-width="2" stroke-linejoin="round"/><path d="M7.7 5.6 A2.75 2.75 0 0 1 13.2 5.6 Z" fill="#474747"/><path d="M18.4 10.5 A2.9 2.9 0 0 1 18.4 16.3 Z" fill="#474747"/></svg>
<div  style="position:absolute;left:1812.3px;top:69px;width:2.6px;height:19.5px;background:#dbe1f4;border-radius:1px;"></div>
<svg style="position:absolute;left:1835.3px;top:66px;" width="25" height="25" viewBox="0 0 25 25" preserveAspectRatio="none"><defs><clipPath id="av"><circle cx="12.5" cy="12.5" r="12.5"/></clipPath><radialGradient id="skin" cx="45%" cy="40%" r="60%"><stop offset="0" stop-color="#e8a897"/><stop offset="0.6" stop-color="#d07f70"/><stop offset="1" stop-color="#a85548"/></radialGradient></defs><g clip-path="url(#av)"><rect width="25" height="25" fill="#7b4a3c"/><ellipse cx="11.5" cy="12.5" rx="10.5" ry="13" fill="url(#skin)"/><path d="M0 0 H25 V6 Q12 1.5 0 7 Z" fill="#dcae9f"/><path d="M3.5 9.8 H10.2 M12.6 9.8 H19.5" stroke="#5a2f27" stroke-width="1.7"/><path d="M3.6 10 V12.6 Q6.8 14 10 12.6 V10 M12.8 10 V12.6 Q16 14 19.3 12.6 V10" fill="none" stroke="#8a4a3e" stroke-width="0.7"/><path d="M8 18.6 Q11.5 20 15 18.6" stroke="#8a3a34" stroke-width="1.2" fill="none"/><path d="M15.5 25 L20 17.5 L25 12 V25 Z" fill="#231815"/></g></svg>
<svg style="position:absolute;left:1890px;top:69px;" width="5" height="20" viewBox="0 0 5 20" preserveAspectRatio="none"><circle cx="2.5" cy="2.5" r="2" fill="#474747"/><circle cx="2.5" cy="10" r="2" fill="#474747"/><circle cx="2.5" cy="17.5" r="2" fill="#474747"/></svg>
</body></html>
